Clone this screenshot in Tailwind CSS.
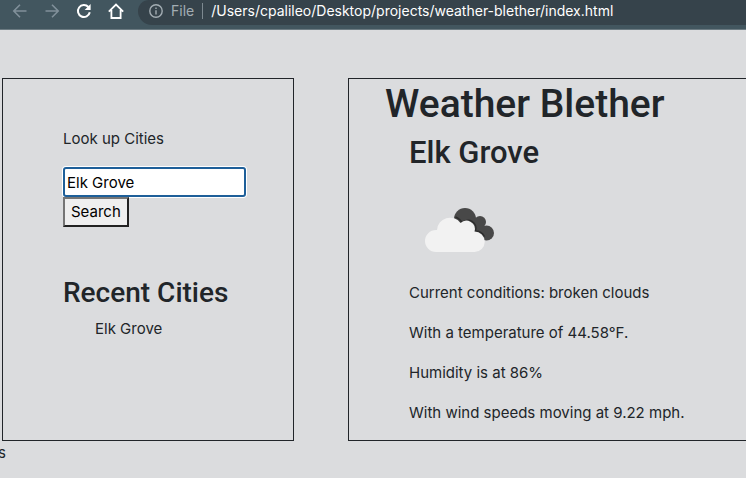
<!DOCTYPE html>
<html lang="en">
<head>
<meta charset="utf-8">
<meta name="viewport" content="width=device-width, initial-scale=1">
<title>Weather Blether</title>
<script src="https://cdn.jsdelivr.net/npm/@tailwindcss/browser@4"></script>
</head>
<body class="min-h-screen overflow-x-hidden bg-[#dbdcde] font-[Inter,'Liberation_Sans',sans-serif] text-[15px] leading-6 text-[#212529]">
<header class="flex items-start border-b border-[#6c7b82] bg-[#42565f] pb-1">
  <nav class="flex h-[22px] items-center gap-4 pl-3 text-white" aria-label="Browser">
    <button type="button" aria-label="Back" class="text-[#81909a]"><svg class="size-4" viewBox="0 0 16 16" fill="none" stroke="currentColor" stroke-width="1.6"><path d="M14.5 8H2M8 1.8 1.8 8 8 14.2"/></svg></button>
    <button type="button" aria-label="Forward" class="text-[#81909a]"><svg class="size-4" viewBox="0 0 16 16" fill="none" stroke="currentColor" stroke-width="1.6"><path d="M1.5 8H14M8 1.8 14.2 8 8 14.2"/></svg></button>
    <button type="button" aria-label="Reload"><svg class="size-4" viewBox="0 0 16 16" fill="none" stroke="currentColor" stroke-width="2"><path d="M13.8 9.3A6 6 0 1 1 12.4 4"/><path d="M14.6 1v6H8.6z" fill="currentColor" stroke="none"/></svg></button>
    <button type="button" aria-label="Home"><svg class="size-4" viewBox="0 0 16 16" fill="none" stroke="currentColor" stroke-width="1.8"><path d="M.8 8.6 8 1.6l7.200 7M3.400 7v8h9.200V7"/></svg></button>
  </nav>
  <div class="ml-3.5 flex h-[25px] min-w-0 flex-1 items-start rounded-tl-[11px] rounded-bl-[14px] bg-[#36434b] pl-[11px] text-[14px] leading-[22px] whitespace-nowrap">
    <svg class="mt-1 size-3.5 shrink-0 text-[#a3adb3]" viewBox="0 0 14 14" fill="none" stroke="currentColor" stroke-width="1.4"><circle cx="7" cy="7" r="6.200"/><path d="M7 6.200v4.300M7 3.400v1.500"/></svg>
    <span class="ml-2 text-[#a3adb3]">File</span>
    <span class="mx-2 mt-[3px] h-4 w-px shrink-0 bg-[#7d8990]"></span>
    <span class="text-white">/Users/cpalileo/Desktop/projects/weather-blether/index.html</span>
  </div>
</header>
<main class="pt-12">
  <div class="grid grid-cols-[minmax(0,292fr)_minmax(0,398fr)] gap-[54px] pl-0.5">
    <section class="border border-[#212529] px-[60px] pt-12">
      <form onsubmit="return false">
        <label for="city" class="mb-4 block">Look up Cities</label>
        <input id="city" type="text" value="Elk Grove" class="block h-[30px] w-[183px] rounded-[3px] border-2 border-[#1e5f99] bg-white px-0.5 text-black ring-1 ring-white outline-none">
        <button type="submit" class="block h-[30px] border-2 border-t-[#757575] border-r-[#222222] border-b-[#222222] border-l-[#757575] bg-[#efefef] px-1.5 text-black">Search</button>
      </form>
      <h3 class="mt-12 mb-1.5 font-[Roboto,sans-serif] text-[28px] leading-9 font-medium whitespace-nowrap">Recent Cities</h3>
      <ul class="pl-8"><li>Elk Grove</li></ul>
    </section>
    <section class="border-y border-l border-[#212529] pb-[15px] pl-9">
      <h1 class="font-[Roboto,sans-serif] text-[39px] leading-[50px] font-medium whitespace-nowrap">Weather Blether</h1>
      <div class="pl-6">
        <h2 class="mt-1.5 font-[Roboto,sans-serif] text-[31px] leading-9 font-medium">Elk Grove</h2>
        <svg class="mt-0.5 h-[100px] w-[100px]" viewBox="0 0 100 100" role="img" aria-label="Broken clouds">
          <g fill="#484848"><circle cx="56" cy="46" r="11"/><circle cx="71" cy="49" r="6"/><circle cx="77.500" cy="60" r="7.500"/><path d="M50 46h22l7 21H60z"/></g>
          <path d="M46.500 44q5 2 6.500 6a8 8 0 0 1 13.500 8q6 0 9 5.500" fill="none" stroke="#2c2c2c" stroke-width="1.500"/>
          <path d="M27 79a11 11 0 0 1 0-22h1a13 13 0 0 1 23.500-7 8.500 8.500 0 0 1 14 8.500 10.250 10.250 0 0 1 0 20.500z" fill="#f2f2f2"/>
        </svg>
        <p class="mt-2 mb-4">Current conditions: broken clouds</p>
        <p class="mb-4">With a temperature of 44.58°F.</p>
        <p class="mb-4">Humidity is at 86%</p>
        <p>With wind speeds moving at 9.22 mph.</p>
      </div>
    </section>
  </div>
  <p class="-ml-0.5">s</p>
</main>
</body>
</html>
